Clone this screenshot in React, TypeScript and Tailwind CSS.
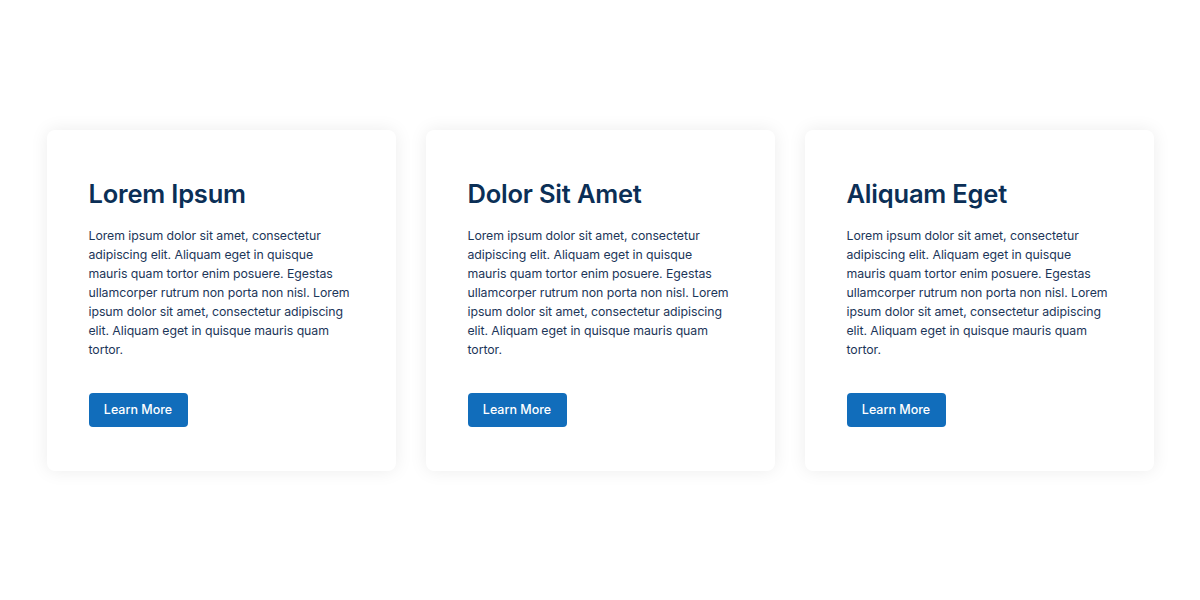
import React from 'react';

interface Card {
  title: string;
  body: string;
}

const BODY =
  'Lorem ipsum dolor sit amet, consectetur adipiscing elit. Aliquam eget in quisque mauris quam tortor enim posuere. Egestas ullamcorper rutrum non porta non nisl. Lorem ipsum dolor sit amet, consectetur adipiscing elit. Aliquam eget in quisque mauris quam tortor.';

const CARDS: Card[] = [
  { title: 'Lorem Ipsum', body: BODY },
  { title: 'Dolor Sit Amet', body: BODY },
  { title: 'Aliquam Eget', body: BODY },
];

export default function App() {
  return (
    <div className="w-[1200px] h-[600px] bg-white flex items-center justify-center font-['Inter',sans-serif]">
      <div className="grid grid-cols-3 gap-[30px] w-[1107px]">
        {CARDS.map((card) => (
          <div
            key={card.title}
            className="bg-white rounded-[8px] shadow-[0_0_18px_rgba(0,0,0,0.08)] h-[341px] pl-[42px] pr-[44px] pt-[48px]"
          >
            <h2 className="text-[25.5px] leading-[32px] font-semibold text-[#0b2f56] tracking-[-0.2px]">
              {card.title}
            </h2>
            <p className="mt-[16px] text-[12.3px] leading-[19px] text-[#1c3659] tracking-[-0.05px]">
              {card.body}
            </p>
            <button className="mt-[34px] h-[34px] w-[99px] rounded-[4px] bg-[#116dbb] text-white text-[12.5px] font-medium leading-[34px]">
              Learn More
            </button>
          </div>
        ))}
      </div>
    </div>
  );
}
